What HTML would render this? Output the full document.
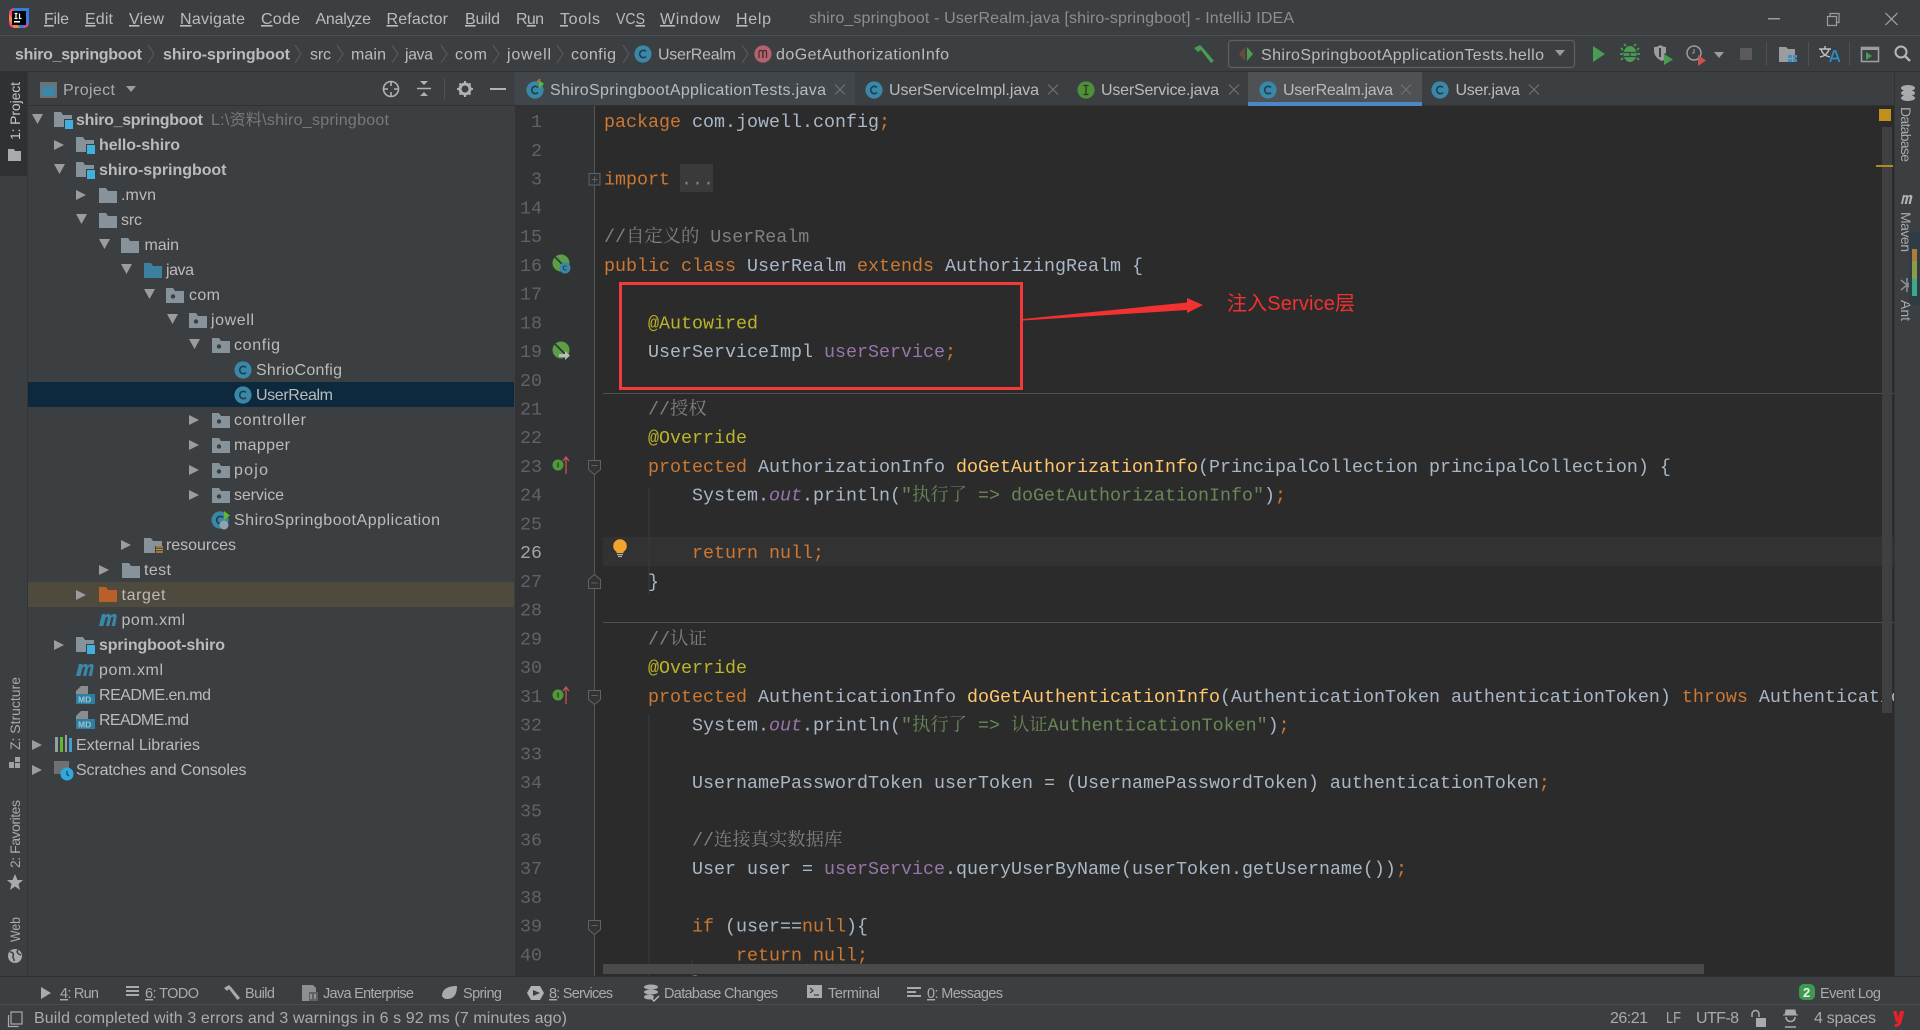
<!DOCTYPE html>
<html><head><meta charset="utf-8"><title>shiro_springboot - UserRealm.java</title>
<style>
html,body{margin:0;padding:0;background:#3c3f41;width:1920px;height:1030px;overflow:hidden}
svg{display:block}
text{white-space:pre}
.u{font:16px "Liberation Sans","Noto Sans CJK SC",sans-serif;fill:#bbbbbb}
.b{font:bold 16px "Liberation Sans",sans-serif;fill:#bbbbbb}
.d{fill:#8b8f91}
.s{font:14.5px "Liberation Sans",sans-serif;fill:#a9acae}
.r{font:14px "Liberation Sans",sans-serif;fill:#a8abad}
.n{font:18.34px "Liberation Mono",monospace;fill:#606366;text-anchor:end}
.c{font:18.34px "Liberation Mono","Noto Serif CJK SC",monospace;fill:#a9b7c6}
.k{fill:#cc7832}.a{fill:#bbb529}.g{fill:#6a8759}.f{fill:#9876aa}.m{fill:#ffc66d}.o{fill:#808080}.i{font-style:italic}
.x{stroke:#6e7173;stroke-width:1.2;fill:none}
.ch{stroke:#55585a;stroke-width:1.2;fill:none}
.ul{text-decoration:underline}
</style></head><body>
<svg width="1920" height="1030" viewBox="0 0 1920 1030" xmlns="http://www.w3.org/2000/svg">
<defs>
<symbol id="ad" overflow="visible"><polygon points="0,0 11,0 5.5,10" fill="#9a9da0"/></symbol>
<symbol id="ar" overflow="visible"><polygon points="0,0 10,5 0,10" fill="#9a9da0"/></symbol>
<symbol id="fo" overflow="visible"><path d="M0 0h7l2 3h9v12H0z" fill="#87939a"/></symbol>
<symbol id="ja" overflow="visible"><path d="M0 0h7l2 3h9v12H0z" fill="#3d7f9e"/></symbol>
<symbol id="pk" overflow="visible"><path d="M0 0h7l2 3h9v12H0z" fill="#87939a"/><circle cx="7" cy="8.5" r="2.2" fill="#3c3f41"/></symbol>
<symbol id="mo" overflow="visible"><path d="M0 0h7l2 3h9v12H0z" fill="#87939a"/><rect x="11" y="8" width="8" height="9" fill="#3fb0e0"/><path d="M10 7h10v1H10zM10 7h1v10h-1z" fill="#3c3f41"/></symbol>
<symbol id="cc" overflow="visible"><circle r="8.6" fill="#3a87a8"/><path d="M3 -2.6A3.7 3.7 0 1 0 3 2.6" fill="none" stroke="#1d3f4e" stroke-width="1.6"/></symbol>
<symbol id="mi" overflow="visible"><path d="M0 15L3 3h3.5l-.4 1.5C7.5 3.2 9 2.5 10.3 3c1 .3 1.4 1.2 1.4 1.8 1.2-1.5 3-2.2 4.4-1.8 1.6.5 1.8 2 1.4 3.6L16 15h-3.4l1.9-8c.2-.9-.2-1.3-.8-1.2-.8.1-1.5.8-1.8 1.8L10.300 15H7l1.900-8c.2-.9-.2-1.300-.8-1.200-.8.1-1.500.8-1.800 1.800L4.400 15z" fill="#3a87a8"/></symbol>
<symbol id="md" overflow="visible"><path d="M5 0h7v9H0V5z" fill="#8a8d8f"/><rect x="0" y="8" width="19" height="10" fill="#2d7ea0"/><text x="2" y="16.500" style="font:bold 8.500px 'Liberation Sans',sans-serif;fill:#9fc4d4">MD</text></symbol>
<clipPath id="ed"><rect x="595" y="106" width="1299" height="870"/></clipPath>
</defs>

<rect width="1920" height="1030" fill="#3c3f41"/>

<!-- Title bar -->
<rect x="0" y="35" width="1920" height="1" fill="#4d5052"/>
<rect x="9" y="8" width="20" height="20" rx="5" fill="#f0447e"/>
<path d="M14 8h15v14l-6 6H14z" fill="#2f7fe0"/>
<path d="M9 20l5 8h6l-11-14z" fill="#f08a3c"/>
<rect x="12" y="11" width="14" height="14" fill="#000"/>
<rect x="14" y="21" width="6" height="1.500" fill="#fff"/>
<path d="M14.500 13.500h3M16 13.500v5M14.500 18.500h3M19.500 13.500v5h2" stroke="#fff" stroke-width="1.200" fill="none"/>

<text class="u" x="44" y="24" textLength="25"><tspan class="ul">F</tspan>ile</text>
<text class="u" x="85" y="24" textLength="28"><tspan class="ul">E</tspan>dit</text>
<text class="u" x="129" y="24" textLength="35"><tspan class="ul">V</tspan>iew</text>
<text class="u" x="180" y="24" textLength="65"><tspan class="ul">N</tspan>avigate</text>
<text class="u" x="261" y="24" textLength="39"><tspan class="ul">C</tspan>ode</text>
<text class="u" x="315.500" y="24" textLength="55.500">Anal<tspan class="ul">y</tspan>ze</text>
<text class="u" x="386.500" y="24" textLength="61.500"><tspan class="ul">R</tspan>efactor</text>
<text class="u" x="465" y="24" textLength="35"><tspan class="ul">B</tspan>uild</text>
<text class="u" x="516" y="24" textLength="28">R<tspan class="ul">u</tspan>n</text>
<text class="u" x="560" y="24" textLength="40"><tspan class="ul">T</tspan>ools</text>
<text class="u" x="616" y="24" textLength="29" lengthAdjust="spacingAndGlyphs">VC<tspan class="ul">S</tspan></text>
<text class="u" x="660" y="24" textLength="60"><tspan class="ul">W</tspan>indow</text>
<text class="u" x="736" y="24" textLength="35"><tspan class="ul">H</tspan>elp</text>
<text class="u d" x="809" y="23" textLength="485">shiro_springboot - UserRealm.java [shiro-springboot] - IntelliJ IDEA</text>
<rect x="1768" y="18" width="12" height="1.500" fill="#9a9da0"/>
<path d="M1827.500 16.500h9v9h-9zM1830 16.500v-3h9v9h-2.500" class="x" style="stroke:#9a9da0"/>
<path d="M1885.500 13l12 12M1897.500 13l-12 12" class="x" style="stroke:#a5a8aa"/>

<!-- Nav bar -->
<rect x="0" y="71" width="1920" height="1" fill="#323232"/>
<text class="b" x="15" y="59.500" textLength="127">shiro_springboot</text>
<text class="b" x="163" y="59.500" textLength="127">shiro-springboot</text>
<text class="u" x="310" y="59.500" textLength="21">src</text>
<text class="u" x="351" y="59.500" textLength="35">main</text>
<text class="u" x="405" y="59.500" textLength="28">java</text>
<text class="u" x="455" y="59.500" textLength="32">com</text>
<text class="u" x="507" y="59.500" textLength="44">jowell</text>
<text class="u" x="571" y="59.500" textLength="45">config</text>
<text class="u" x="658" y="59.500" textLength="78">UserRealm</text>
<text class="u" x="776" y="59.500" textLength="173">doGetAuthorizationInfo</text>
<path class="ch" d="M148 45l6 9-6 9M295 45l6 9-6 9M337 45l6 9-6 9M392 45l6 9-6 9M441 45l6 9-6 9M493 45l6 9-6 9M557 45l6 9-6 9M623 45l6 9-6 9M742 45l6 9-6 9"/>
<use href="#cc" x="643" y="54"/>
<circle cx="763" cy="54" r="8.600" fill="#b5616f"/>
<path d="M759 58v-6c0-2 3.500-2 3.800 0v6M763 58v-6c0-2 3.500-2 3.500 0v6" fill="none" stroke="#4a2a30" stroke-width="1.200"/>
<path d="M1194 48l6-3 3 3 11 13-3 2-10-13-3 2z" fill="#499c54"/>
<rect x="1228.500" y="40.500" width="346" height="27" rx="3" fill="none" stroke="#5e6162" stroke-width="1.200"/>
<path d="M1245 47l-6 7 6 7z" fill="#6b4a3a"/><path d="M1247 47l6 7-6 7z" fill="#499c54"/>
<text class="u" x="1261" y="60" textLength="283">ShiroSpringbootApplicationTests.hello</text>
<polygon points="1555,50 1565,50 1560,56" fill="#9a9da0"/>
<polygon points="1593,46 1605,54 1593,62" fill="#499c54"/>
<ellipse cx="1630" cy="54" rx="6.500" ry="8" fill="#499c54"/>
<path d="M1623 50l-2-2M1637 50l2-2M1623 54h-3M1637 54h3M1623 58l-2 2M1637 58l2 2M1626 46l-2-2M1634 46l2-2" stroke="#499c54" stroke-width="1.800"/>
<path d="M1624 52.500h12M1624 56.500h12M1630 52.500v4" stroke="#3c3f41" stroke-width="1.200"/>
<path d="M1654 47c3 0 5-1 6-2 2 1 4 2 6 2v6l-2 1v6l-2 1c-5-2-8-6-8-10z" fill="#9a9da0"/>
<path d="M1660 48v9" stroke="#3c3f41" stroke-width="2"/>
<polygon points="1664,54 1673,59.500 1664,65" fill="#499c54"/>
<circle cx="1694" cy="53" r="7" fill="none" stroke="#9a9da0" stroke-width="1.500"/><path d="M1694 49v4h-2" stroke="#9a9da0" fill="none"/>
<polygon points="1698,55 1706,60.500 1698,66" fill="#c75450"/>
<polygon points="1714,52 1724,52 1719,58" fill="#9a9da0"/>
<rect x="1740" y="48" width="12" height="12" fill="#5a5a5a"/>
<rect x="1766" y="42" width="1" height="24" fill="#4f5254"/>
<path d="M1779 47h7l2 2h7v13h-16z" fill="#9a9da0"/><path d="M1788 55h4v3h-4zM1793 55h4v3h-4zM1788 59h4v3h-4zM1793 59h4v3h-4z" fill="#3d8fc6"/>
<rect x="1808" y="42" width="1" height="24" fill="#4f5254"/>
<path d="M1819 49h12M1825 46v3M1821 49c1 4 4 7 9 8M1829 49c-1 4-4 7-9 8" stroke="#c0c3c5" stroke-width="1.400" fill="none"/>
<path d="M1830 62l4-11h1.500l4 11M1831.500 58.500h6.500" stroke="#2f8fc9" stroke-width="1.800" fill="none"/>
<rect x="1849" y="42" width="1" height="24" fill="#4f5254"/>
<rect x="1861.500" y="47.500" width="17" height="14" fill="none" stroke="#9a9da0" stroke-width="1.600"/><rect x="1861" y="47" width="18" height="3" fill="#9a9da0"/><polygon points="1866,52 1872,56 1866,60" fill="#499c54"/>
<circle cx="1901" cy="52" r="5.500" fill="none" stroke="#b5b8ba" stroke-width="2"/><path d="M1905 56l5 5" stroke="#b5b8ba" stroke-width="2.400"/>

<!-- Left stripe / panel -->
<rect x="0" y="72" width="27" height="904" fill="#3c3f41"/>
<rect x="0" y="72" width="27" height="104" fill="#2f3234"/>
<rect x="27" y="72" width="1" height="904" fill="#333537"/>
<text class="r" transform="translate(20,140) rotate(-90)" textLength="58" style="fill:#c4c6c8">1: Project</text>
<path d="M8 149h6l1 2h6v10H8z" fill="#a8abad"/>
<text class="r" transform="translate(20,750) rotate(-90)" textLength="73">Z: Structure</text>
<path d="M9 762h5v6H9zM15 757h5v5h-5zM15 763h5v5h-5z" fill="#a0a3a5"/>
<text class="r" transform="translate(20,868) rotate(-90)" textLength="68">2: Favorites</text>
<polygon points="15,874 17.500,880 23,880 18.500,884 20,890 15,886.500 10,890 11.500,884 7,880 12.500,880" fill="#a8abad"/>
<text class="r" transform="translate(20,942) rotate(-90)" textLength="25" lengthAdjust="spacingAndGlyphs">Web</text>
<circle cx="15" cy="956" r="7" fill="#a8abad"/><path d="M10 952c3 0 4 2 3 4s2 3 1 5M18 950c-2 2 0 4 3 5" stroke="#3c3f41" stroke-width="1.500" fill="none"/>

<!-- Project header -->
<rect x="40" y="82" width="17" height="16" fill="#6e7173"/><rect x="42" y="86" width="13" height="10" fill="#3a87a8"/>
<text class="u" x="63" y="95" textLength="52" style="fill:#a9acae">Project</text>
<polygon points="126,86 136,86 131,92" fill="#9a9da0"/>
<circle cx="391" cy="89" r="7.500" fill="none" stroke="#b0b3b5" stroke-width="1.600"/><path d="M391 81v5M391 92v5M383 89h5M394 89h5" stroke="#b0b3b5" stroke-width="1.600"/>
<path d="M417 88.500h14" stroke="#b0b3b5" stroke-width="1.500"/><path d="M420 81h8l-4 4zM420 96h8l-4-4z" fill="#b0b3b5"/>
<rect x="444" y="78" width="1" height="22" fill="#4f5254"/>
<circle cx="465" cy="89" r="5" fill="none" stroke="#b0b3b5" stroke-width="3"/><path d="M465 81v3M465 94v3M457 89h3M470 89h3M459.500 83.500l2 2M468.500 92.500l2 2M470.500 83.500l-2 2M461.500 92.500l-2 2" stroke="#b0b3b5" stroke-width="2"/>
<rect x="490" y="88" width="16" height="2" fill="#b0b3b5"/>
<rect x="28" y="105" width="487" height="1" fill="#323232"/>

<!-- Tree highlights -->
<rect x="28" y="382" width="486" height="25" fill="#0d293e"/>
<rect x="28" y="582" width="486" height="25" fill="#4f4a3e"/>

<!-- Tree arrows -->
<use href="#ad" x="32" y="114"/><use href="#ar" x="54" y="140"/><use href="#ad" x="54" y="164"/>
<use href="#ar" x="76" y="190"/><use href="#ad" x="76" y="214"/><use href="#ad" x="99" y="239"/>
<use href="#ad" x="121" y="264"/><use href="#ad" x="144" y="289"/><use href="#ad" x="167" y="314"/>
<use href="#ad" x="189" y="339"/>
<use href="#ar" x="189" y="415"/><use href="#ar" x="189" y="440"/><use href="#ar" x="189" y="465"/><use href="#ar" x="189" y="490"/>
<use href="#ar" x="121" y="540"/><use href="#ar" x="99" y="565"/><use href="#ar" x="76" y="590"/>
<use href="#ar" x="54" y="640"/><use href="#ar" x="32" y="740"/><use href="#ar" x="32" y="765"/>

<!-- Tree icons -->
<use href="#mo" x="54" y="112"/><use href="#mo" x="76" y="137"/><use href="#mo" x="76" y="162"/>
<use href="#fo" x="99" y="188"/><use href="#fo" x="99" y="213"/><use href="#fo" x="121" y="238"/>
<use href="#ja" x="144" y="263"/><use href="#pk" x="166" y="288"/><use href="#pk" x="189" y="313"/>
<use href="#pk" x="212" y="338"/>
<use href="#cc" x="243" y="370"/><use href="#cc" x="243" y="395"/>
<use href="#pk" x="212" y="413"/><use href="#pk" x="212" y="438"/><use href="#pk" x="212" y="463"/><use href="#pk" x="212" y="488"/>
<use href="#cc" x="220" y="520"/><polygon points="224,511 230,515.500 224,520" fill="#5fb832"/><circle cx="224" cy="525" r="4.500" fill="#8fa3ad"/>
<use href="#fo" x="144" y="538"/><path d="M155 546h8v8h-8z" fill="#3c3f41"/><path d="M156 547h7M156 549.500h7M156 552h7" stroke="#d49b3a" stroke-width="1.200"/>
<use href="#fo" x="122" y="563"/>
<path d="M99 587h7l2 3h9v12H99z" fill="#b95f2a"/>
<use href="#mi" x="99" y="611"/>
<use href="#mo" x="76" y="637"/>
<use href="#mi" x="76" y="661"/>
<use href="#md" x="76" y="686"/><use href="#md" x="76" y="711"/>
<path d="M55 737h3v15h-3z" fill="#9a9da0"/><path d="M60 737h3v15h-3z" fill="#5fb832"/><path d="M65 735h2v17h-2z" fill="#9a9da0"/><path d="M69 738h3v14h-3z" fill="#3d9fd6"/>
<rect x="54" y="761" width="15" height="13" fill="#6e7173"/><circle cx="67" cy="774" r="6.500" fill="#2fa8e0"/><path d="M67 771v3.500l2 1.500" stroke="#173f52" stroke-width="1.200" fill="none"/>

<!-- Tree text -->
<text class="b" x="76" y="125" textLength="127">shiro_springboot</text>
<text class="u" x="211" y="125" textLength="178" style="fill:#777a7c">L:\资料\shiro_springboot</text>
<text class="b" x="99" y="150" textLength="81">hello-shiro</text>
<text class="b" x="99" y="175" textLength="127.500">shiro-springboot</text>
<text class="u" x="121" y="200" textLength="35">.mvn</text>
<text class="u" x="121" y="225" textLength="21">src</text>
<text class="u" x="144.500" y="250" textLength="34.500">main</text>
<text class="u" x="166" y="275" textLength="28">java</text>
<text class="u" x="189" y="300" textLength="31">com</text>
<text class="u" x="211" y="325" textLength="43">jowell</text>
<text class="u" x="234" y="350" textLength="46">config</text>
<text class="u" x="256" y="375" textLength="86">ShrioConfig</text>
<text class="u" x="256" y="400" textLength="77">UserRealm</text>
<text class="u" x="234" y="425" textLength="72">controller</text>
<text class="u" x="234" y="450" textLength="56">mapper</text>
<text class="u" x="234" y="475" textLength="34">pojo</text>
<text class="u" x="234" y="500" textLength="50">service</text>
<text class="u" x="234" y="525" textLength="206">ShiroSpringbootApplication</text>
<text class="u" x="166" y="550" textLength="70">resources</text>
<text class="u" x="144" y="575" textLength="27">test</text>
<text class="u" x="121.500" y="600" textLength="44">target</text>
<text class="u" x="121.500" y="625" textLength="63.500">pom.xml</text>
<text class="b" x="99" y="650" textLength="126">springboot-shiro</text>
<text class="u" x="99" y="675" textLength="64">pom.xml</text>
<text class="u" x="99" y="700" textLength="112">README.en.md</text>
<text class="u" x="99" y="725" textLength="90">README.md</text>
<text class="u" x="76" y="750" textLength="124">External Libraries</text>
<text class="u" x="76" y="775" textLength="170.500">Scratches and Consoles</text>

<!-- Tabs -->
<rect x="515" y="72" width="340" height="33" fill="#41464a"/>
<rect x="1248" y="72" width="174" height="30" fill="#4e5254"/>
<rect x="1248" y="102" width="174" height="4" fill="#4a88c7"/>
<rect x="515" y="105" width="733" height="1" fill="#323232"/><rect x="1422" y="105" width="498" height="1" fill="#323232"/>
<use href="#cc" x="535" y="90"/><polygon points="539,80 544,84 539,88" fill="#5fb832"/><path d="M537 82l3-3" stroke="#e0602c" stroke-width="1.500"/>
<text class="u" x="550" y="95" textLength="276">ShiroSpringbootApplicationTests.java</text>
<path class="x" d="M835 84.500l10 10M845 84.500l-10 10"/>
<use href="#cc" x="874" y="90"/>
<text class="u" x="889" y="95" textLength="150">UserServiceImpl.java</text>
<path class="x" d="M1048 84.500l10 10M1058 84.500l-10 10"/>
<circle cx="1086" cy="90" r="8.600" fill="#4f8f3a"/><path d="M1083.500 85.500h5M1086 85.500v9M1083.500 94.500h5" stroke="#1f3d18" stroke-width="1.300"/>
<text class="u" x="1101" y="95" textLength="118">UserService.java</text>
<path class="x" d="M1229 84.500l10 10M1239 84.500l-10 10"/>
<use href="#cc" x="1268" y="90"/>
<text class="u" x="1283" y="95" textLength="110">UserRealm.java</text>
<path class="x" d="M1401 84.500l10 10M1411 84.500l-10 10"/>
<use href="#cc" x="1440" y="90"/>
<text class="u" x="1455.500" y="95" textLength="64.500">User.java</text>
<path class="x" d="M1529 84.500l10 10M1539 84.500l-10 10"/>

<!-- Gutter and editor -->
<rect x="515" y="106" width="80" height="870" fill="#313335"/>
<rect x="595" y="106" width="1299" height="870" fill="#2b2b2b"/>
<rect x="603" y="537" width="1291" height="29" fill="#323232"/>
<rect x="594" y="106" width="1" height="870" fill="#55585a"/>
<rect x="603" y="393" width="1291" height="1" fill="#515151"/>
<rect x="603" y="622" width="1291" height="1" fill="#515151"/>
<path d="M649 488v106M649 714v262M692 960v16" stroke="#3b3b3b" stroke-width="1"/>

<!-- Line numbers -->
<text class="n" x="542" y="127.200">1</text><text class="n" x="542" y="155.900">2</text><text class="n" x="542" y="184.700">3</text>
<text class="n" x="542" y="213.400">14</text><text class="n" x="542" y="242.100">15</text><text class="n" x="542" y="270.900">16</text>
<text class="n" x="542" y="299.600">17</text><text class="n" x="542" y="328.300">18</text><text class="n" x="542" y="357">19</text>
<text class="n" x="542" y="385.800">20</text><text class="n" x="542" y="414.500">21</text><text class="n" x="542" y="443.200">22</text>
<text class="n" x="542" y="472">23</text><text class="n" x="542" y="500.700">24</text><text class="n" x="542" y="529.400">25</text>
<text class="n" x="542" y="558.200" style="fill:#a4a3a3">26</text><text class="n" x="542" y="586.900">27</text><text class="n" x="542" y="615.600">28</text>
<text class="n" x="542" y="644.300">29</text><text class="n" x="542" y="673.100">30</text><text class="n" x="542" y="701.800">31</text>
<text class="n" x="542" y="730.500">32</text><text class="n" x="542" y="759.300">33</text><text class="n" x="542" y="788">34</text>
<text class="n" x="542" y="816.700">35</text><text class="n" x="542" y="845.500">36</text><text class="n" x="542" y="874.200">37</text>
<text class="n" x="542" y="902.900">38</text><text class="n" x="542" y="931.600">39</text><text class="n" x="542" y="960.400">40</text>

<!-- Gutter icons -->
<circle cx="561" cy="263" r="8.500" fill="#5a9e46"/><path d="M555 257l12 12" stroke="#313335" stroke-width="1.600"/><circle cx="565" cy="268" r="5.500" fill="#3a87a8"/><path d="M566.500 266.500a2 2 0 1 0 0 3" stroke="#1d3f4e" fill="none"/>
<circle cx="561" cy="350" r="8.500" fill="#5a9e46"/><path d="M555 344l12 12" stroke="#313335" stroke-width="1.600"/><path d="M559 354h6v-3l5 4.500-5 4.500v-3h-6z" fill="#b9bcbe"/>
<circle cx="558" cy="465" r="5.500" fill="#4f9a3a"/><path d="M558 462.500v5" stroke="#173a10" stroke-width="1.200"/><path d="M566 474v-17M563 461l3-4 3 4" stroke="#c75450" stroke-width="1.300" fill="none"/>
<circle cx="558" cy="695" r="5.500" fill="#4f9a3a"/><path d="M558 692.500v5" stroke="#173a10" stroke-width="1.200"/><path d="M566 704v-17M563 691l3-4 3 4" stroke="#c75450" stroke-width="1.300" fill="none"/>
<!-- fold markers -->
<rect x="589" y="173.500" width="11" height="11.500" fill="#313335" stroke="#606366"/><path d="M591.500 179.500h6M594.500 176.500v6" stroke="#606366"/>
<path d="M588.500 460.500h12v9l-6 5-6-5z" fill="#313335" stroke="#606366"/><path d="M591.500 465.500h6" stroke="#606366"/>
<path d="M588.500 588.500h12v-9l-6-5-6 5z" fill="#313335" stroke="#606366"/><path d="M591.500 583h6" stroke="#606366"/>
<path d="M588.500 690.500h12v9l-6 5-6-5z" fill="#313335" stroke="#606366"/><path d="M591.500 695.500h6" stroke="#606366"/>
<path d="M588.500 920.500h12v9l-6 5-6-5z" fill="#313335" stroke="#606366"/><path d="M591.500 925.500h6" stroke="#606366"/>
<!-- bulb -->
<circle cx="620" cy="546" r="6.800" fill="#f2a42c"/><path d="M616.500 550h7v3h-7z" fill="#f2a42c"/><path d="M617 554.500h6M618 556.500h4" stroke="#aeb1b3" stroke-width="1.300"/>

<!-- Code -->
<g clip-path="url(#ed)">
<rect x="680" y="164" width="33" height="28" fill="#3a3a3a"/>
<text class="c" x="604" y="127.200"><tspan class="k">package</tspan> com.jowell.config<tspan class="k">;</tspan></text>
<text class="c" x="604" y="184.700"><tspan class="k">import</tspan> <tspan class="o">...</tspan></text>
<text class="c o" x="604" y="242.100">//自定义的 UserRealm</text>
<text class="c" x="604" y="270.900"><tspan class="k">public class</tspan> UserRealm <tspan class="k">extends</tspan> AuthorizingRealm {</text>
<text class="c a" x="648" y="328.300">@Autowired</text>
<text class="c" x="648" y="357">UserServiceImpl <tspan class="f">userService</tspan><tspan class="k">;</tspan></text>
<text class="c o" x="648" y="414.500">//授权</text>
<text class="c a" x="648" y="443.200">@Override</text>
<text class="c" x="648" y="472"><tspan class="k">protected</tspan> AuthorizationInfo <tspan class="m">doGetAuthorizationInfo</tspan>(PrincipalCollection principalCollection) {</text>
<text class="c" x="692" y="500.700">System.<tspan class="f i">out</tspan>.println(<tspan class="g">"执行了 =&gt; doGetAuthorizationInfo"</tspan>)<tspan class="k">;</tspan></text>
<text class="c k" x="692" y="558.200">return null;</text>
<text class="c" x="648" y="586.900">}</text>
<text class="c o" x="648" y="644.300">//认证</text>
<text class="c a" x="648" y="673.100">@Override</text>
<text class="c" x="648" y="701.800"><tspan class="k">protected</tspan> AuthenticationInfo <tspan class="m">doGetAuthenticationInfo</tspan>(AuthenticationToken authenticationToken) <tspan class="k">throws</tspan> AuthenticationException {</text>
<text class="c" x="692" y="730.500">System.<tspan class="f i">out</tspan>.println(<tspan class="g">"执行了 =&gt; 认证AuthenticationToken"</tspan>)<tspan class="k">;</tspan></text>
<text class="c" x="692" y="788">UsernamePasswordToken userToken = (UsernamePasswordToken) authenticationToken<tspan class="k">;</tspan></text>
<text class="c o" x="692" y="845.500">//连接真实数据库</text>
<text class="c" x="692" y="874.200">User user = <tspan class="f">userService</tspan>.queryUserByName(userToken.getUsername())<tspan class="k">;</tspan></text>
<text class="c" x="692" y="931.600"><tspan class="k">if</tspan> (user==<tspan class="k">null</tspan>){</text>
<text class="c k" x="736" y="960.400">return null;</text>
<text class="c" x="692" y="989.100">}</text>
</g>

<!-- Scrollbars -->
<rect x="1882" y="127" width="10" height="586" fill="#3e4041"/>
<rect x="1879" y="109" width="12" height="12" fill="#c0901a"/>
<rect x="1876" y="165" width="17" height="2" fill="#b08b20"/>
<rect x="603" y="964" width="1101" height="10" fill="#4a4a4a"/>

<!-- Annotation -->
<rect x="620.500" y="283.500" width="401" height="105" fill="none" stroke="#f23a3a" stroke-width="3"/>
<polygon points="1023,319 1187,302.500 1187,298 1203,305 1187,313 1187,310 1023,320.500" fill="#f23131"/>
<text x="1227" y="310" textLength="128" style="font:20px 'Liberation Sans','Noto Sans CJK SC',sans-serif;fill:#f23131">注入Service层</text>

<!-- Right stripe -->
<rect x="1894" y="72" width="26" height="904" fill="#3c3f41"/>
<rect x="1894" y="72" width="1" height="904" fill="#333537"/>
<ellipse cx="1908" cy="88" rx="7" ry="3" fill="#a8abad"/><ellipse cx="1908" cy="93" rx="7" ry="3" fill="#a8abad"/><ellipse cx="1908" cy="98" rx="7" ry="3" fill="#a8abad"/>
<text class="r" transform="translate(1901,107) rotate(90)" textLength="55">Database</text>
<path d="M1901 204l2-9h2l-.3 1c1.200-1.200 2.600-1.500 3.300 0 1.200-1.200 4-2 4.500.5l-1.800 7.500h-2.200l1.500-6.500c.2-1-1-1-1.800.2l-1.400 6.300h-2.200l1.500-6.500c.2-1-1-1-1.800.2l-1.400 6.300z" fill="#b0b3b5"/>
<text class="r" transform="translate(1901,212) rotate(90)" textLength="40">Maven</text>
<path d="M1901 280l12 10M1913 280l-12 10M1907 278v14" stroke="#8d9092" stroke-width="1.500"/>
<text class="r" transform="translate(1901,300) rotate(90)" textLength="21">Ant</text>
<rect x="1909" y="232" width="11" height="73" rx="3" fill="#2f3b45"/>
<rect x="1912" y="249" width="5" height="12" fill="#b07a3a"/><rect x="1912" y="261" width="5" height="18" fill="#8e9a48"/><rect x="1912" y="279" width="5" height="17" fill="#3fa88a"/>

<!-- Tool bar bottom -->
<rect x="0" y="976" width="1920" height="1" fill="#2f3133"/>
<rect x="0" y="1004" width="1920" height="1" fill="#4a4d4f"/>
<polygon points="41,987 51,993 41,999" fill="#a8abad"/>
<text class="s" x="60" y="998" textLength="39"><tspan class="ul">4</tspan>: Run</text>
<path d="M126 987h13M126 991h13M126 995h13" stroke="#a8abad" stroke-width="2"/>
<text class="s" x="145" y="998" textLength="54"><tspan class="ul">6</tspan>: TODO</text>
<path d="M224 988l5-3 2 2 9 11-2.500 2-8.500-11-2 2z" fill="#a8abad"/>
<text class="s" x="245" y="998" textLength="30">Build</text>
<path d="M302 985h11l3 3v13h-14z" fill="#8d9092"/><rect x="309" y="992" width="9" height="9" fill="#5f6264"/><path d="M311 994v5M315 994v5" stroke="#c0c3c5"/>
<text class="s" x="323" y="998" textLength="91">Java Enterprise</text>
<path d="M442 996c0-7 6-10 15-10 0 8-3 13-10 13-2 0-4-1-5-3z" fill="#a8abad"/>
<text class="s" x="463" y="998" textLength="39">Spring</text>
<path d="M531 986h9l4 7-4 7h-9l-4-7z" fill="#b0b3b5"/><polygon points="533,990 540,993 533,996" fill="#3c3f41"/>
<text class="s" x="549" y="998" textLength="64"><tspan class="ul">8</tspan>: Services</text>
<ellipse cx="651" cy="987" rx="7" ry="2.500" fill="#a8abad"/><ellipse cx="651" cy="992" rx="7" ry="2.500" fill="#a8abad"/><ellipse cx="649" cy="997" rx="5" ry="2.500" fill="#a8abad"/><path d="M651 998l3 3 5-5" stroke="#c0c3c5" fill="none" stroke-width="1.300"/>
<text class="s" x="664" y="998" textLength="114">Database Changes</text>
<rect x="807" y="985" width="15" height="13" fill="#a8abad"/><path d="M810 988l3 2.500-3 2.500M814 995h5" stroke="#3c3f41" stroke-width="1.200" fill="none"/>
<text class="s" x="828" y="998" textLength="52">Terminal</text>
<path d="M907 987h14v2h-14zM907 991h9v2h-9zM907 995h14v2h-14z" fill="#a8abad"/>
<text class="s" x="927" y="998" textLength="76"><tspan class="ul">0</tspan>: Messages</text>
<rect x="1799" y="984" width="16" height="16" rx="5" fill="#3f9a50"/>
<text x="1803" y="997" style="font:bold 13px 'Liberation Sans',sans-serif;fill:#e8f2e8">2</text>
<text class="s" x="1820" y="998" textLength="61">Event Log</text>

<!-- Status bar -->
<rect x="11" y="1012" width="11" height="12" fill="none" stroke="#a8abad" stroke-width="1.200"/><path d="M8.500 1015v11.500h10" fill="none" stroke="#a8abad" stroke-width="1.200"/>
<text class="u" x="34" y="1023" textLength="533" style="fill:#a9acae">Build completed with 3 errors and 3 warnings in 6 s 92 ms (7 minutes ago)</text>
<text class="u" x="1610" y="1023" textLength="38" style="fill:#a9acae">26:21</text>
<text class="u" x="1666" y="1023" textLength="15" lengthAdjust="spacingAndGlyphs" style="fill:#a9acae">LF</text>
<text class="u" x="1696" y="1023" textLength="43" style="fill:#a9acae">UTF-8</text>
<rect x="1756" y="1018" width="10" height="9" fill="#a8abad"/><path d="M1752 1017v-3a3.500 3.500 0 0 1 7 0v3" fill="none" stroke="#a8abad" stroke-width="1.500"/>
<path d="M1785 1015h11l-1-5h-9zM1783 1015h15" stroke="#a8abad" fill="#a8abad"/><path d="M1786 1017c0 6 9 6 9 0M1785 1027h11" stroke="#a8abad" stroke-width="1.600" fill="none"/>
<text class="u" x="1814" y="1023" textLength="62" style="fill:#a9acae">4 spaces</text>
<path d="M1893 1011h3.500l1.500 7 2-7h4.500l-3 11c-.8 3-3 5-7 5l.5-3c1.500 0 2.500-.5 3-2h-2z" fill="#ea2027"/>
</svg>
</body></html>
